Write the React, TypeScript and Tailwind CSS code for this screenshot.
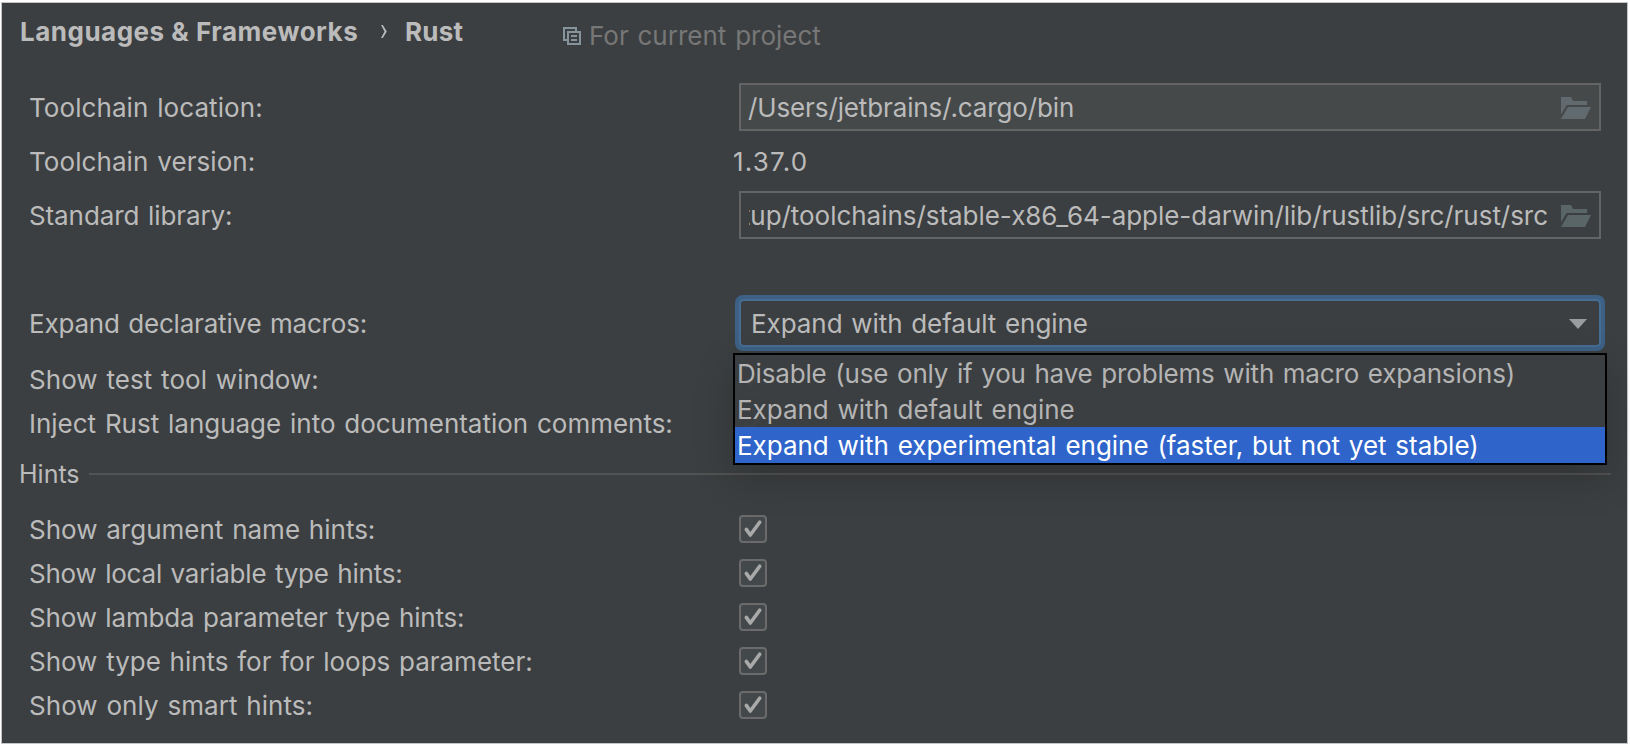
import React from "react";

function CopyIcon() {
  return (
    <svg width="18" height="18" viewBox="0 0 18 18" className="shrink-0" fill="#87939a">
      <path d="M0 0H14V4H12V2H2V12H4V14H0Z" />
      <path fillRule="evenodd" d="M4 4H18V18H4ZM6 6V16H16V6Z" />
      <path d="M8 8H14V10H8ZM8 12H14V14H8Z" />
    </svg>
  );
}

function FolderIcon({ className }: { className: string }) {
  return (
    <svg width="30" height="24" viewBox="0 -2 30 24" className={`shrink-0 ${className}`}>
      <path d="M0 0H10L12 4H26V8H5.7L0 17.3Z" />
      <path d="M7 10H30L24 22H0Z" />
    </svg>
  );
}

function Checkbox() {
  return (
    <div className="ml-[5px] flex size-7 items-center justify-center rounded-[4px] border-2 border-[#6b6b6b] bg-[#43494a]">
      <svg width="24" height="24" viewBox="0 0 24 24" fill="none" stroke="#a9a9a9" strokeWidth="3.6" strokeLinecap="round" strokeLinejoin="round">
        <path d="M5.3 12.4L9.3 18L18.7 5.2" />
      </svg>
    </div>
  );
}

function Row({ label, height, text, children }: { label: string; height: string; text: string; children: React.ReactNode }) {
  return (
    <div className={`flex shrink-0 items-center pl-[27px] ${height}`}>
      <div className={`w-[705px] shrink-0 whitespace-nowrap ${text}`}>{label}</div>
      {children}
    </div>
  );
}

const options = [
  { label: "Disable (use only if you have problems with macro expansions)", style: "tracking-[-0.165px] text-[#b4b4b4]" },
  { label: "Expand with default engine", style: "tracking-[-0.03px] text-[#b4b4b4]" },
  { label: "Expand with experimental engine (faster, but not yet stable)", style: "tracking-[-0.02px] bg-[#2f65ca] text-white" },
];

const hints = [
  { label: "Show argument name hints:", text: "pt-0.5 tracking-normal" },
  { label: "Show local variable type hints:", text: "pt-0.5 tracking-[-0.22px]" },
  { label: "Show lambda parameter type hints:", text: "pt-0.5 tracking-[-0.18px]" },
  { label: "Show type hints for for loops parameter:", text: "pt-0.5 tracking-[-0.02px]" },
  { label: "Show only smart hints:", text: "pt-0.5 tracking-[0.04px]" },
];

export default function App() {
  return (
    <div className="h-[747px] w-[1630px] overflow-hidden bg-white pt-[2px] pl-px">
      <div className="flex h-[742px] w-[1627px] flex-col border border-[#c4c4c4] bg-[#3c3f41] font-['Inter',sans-serif] text-[26px] leading-[32px] text-[#bbbbbb] [word-spacing:1.5px]">
        <header className="mb-5 flex h-[57px] shrink-0 items-center pl-[18px] whitespace-nowrap">
          <span className="w-[361px] font-bold tracking-[0.5px] [word-spacing:0px]">Languages &amp; Frameworks</span>
          <svg width="6" height="13" viewBox="0 0 6 13" className="shrink-0" fill="#bbbbbb">
            <path d="M0 0H1.8L5.8 6.5L1.8 13H0L3.5 6.5Z" />
          </svg>
          <span className="ml-[18px] w-[158px] font-bold tracking-[0.2px]">Rust</span>
          <span className="flex items-center gap-2 pt-2 text-[#777777]">
            <CopyIcon />
            For current project
          </span>
        </header>

        <Row label="Toolchain location:" height="h-[54px]" text="pt-0.5 tracking-[0.07px]">
          <div className="ml-[5px] flex h-12 w-[862px] items-center justify-between border-2 border-[#646464] bg-[#45494a] pr-2 pl-[7px]">
            <span className="pt-0.5 tracking-[-0.12px]">/Users/jetbrains/.cargo/bin</span>
            <FolderIcon className="fill-[#616b6f]" />
          </div>
        </Row>
        <Row label="Toolchain version:" height="h-[54px]" text="pt-0.5 tracking-[0.07px]">
          <span className="-ml-px pt-0.5 tracking-[1.2px]">1.37.0</span>
        </Row>
        <Row label="Standard library:" height="h-[54px]" text="pt-0.5 tracking-[-0.1px]">
          <div className="ml-[5px] flex h-12 w-[862px] items-center justify-between border-2 border-[#646464] pr-2 pl-2">
            <span className="flex w-[799px] justify-end overflow-hidden pt-0.5 tracking-[-0.04px] whitespace-nowrap">
              tup/toolchains/stable-x86_64-apple-darwin/lib/rustlib/src/rust/src
            </span>
            <FolderIcon className="fill-[#5a6567]" />
          </div>
        </Row>

        <div className="relative z-10 mt-[53px] mb-[7px]">
          <Row label="Expand declarative macros:" height="h-[56px]" text="pt-0.5 tracking-[-0.2px]">
            <div className="relative ml-px">
              <div className="h-14 w-[870px] rounded-[8px] bg-[#3d6185] p-1">
                <div className="flex h-12 items-center justify-between rounded-[5px] border-2 border-[#466d94] bg-[#3c3f41] pt-0.5 pr-3 pl-[10px]">
                  <span className="tracking-[-0.06px]">Expand with default engine</span>
                  <svg width="18" height="10" viewBox="0 0 18 10" fill="#9a9da0">
                    <path d="M0 0H18L9 10Z" />
                  </svg>
                </div>
              </div>
              <div className="absolute top-[58px] -left-[2px] w-[874px] border-2 border-black bg-[#3c3f41]/97 shadow-[0_14px_40px_rgba(0,0,0,0.2)]">
                {options.map((o) => (
                  <div key={o.label} className={`h-9 pt-[3px] pl-[2px] whitespace-nowrap ${o.style}`}>
                    {o.label}
                  </div>
                ))}
              </div>
            </div>
          </Row>
        </div>

        <Row label="Show test tool window:" height="h-[44px]" text="tracking-[0.04px]">
          <Checkbox />
        </Row>
        <Row label="Inject Rust language into documentation comments:" height="h-[44px]" text="tracking-[-0.01px]">
          <Checkbox />
        </Row>

        <div className="mt-3.5 mb-[19px] flex h-[28px] shrink-0 items-center pr-4 pl-[17px]">
          <span className="w-[70px] text-[25px]">Hints</span>
          <div className="h-[2px] grow bg-[#535353]" />
        </div>

        {hints.map((h) => (
          <Row key={h.label} label={h.label} height="h-[44px]" text={h.text}>
            <Checkbox />
          </Row>
        ))}
      </div>
    </div>
  );
}
